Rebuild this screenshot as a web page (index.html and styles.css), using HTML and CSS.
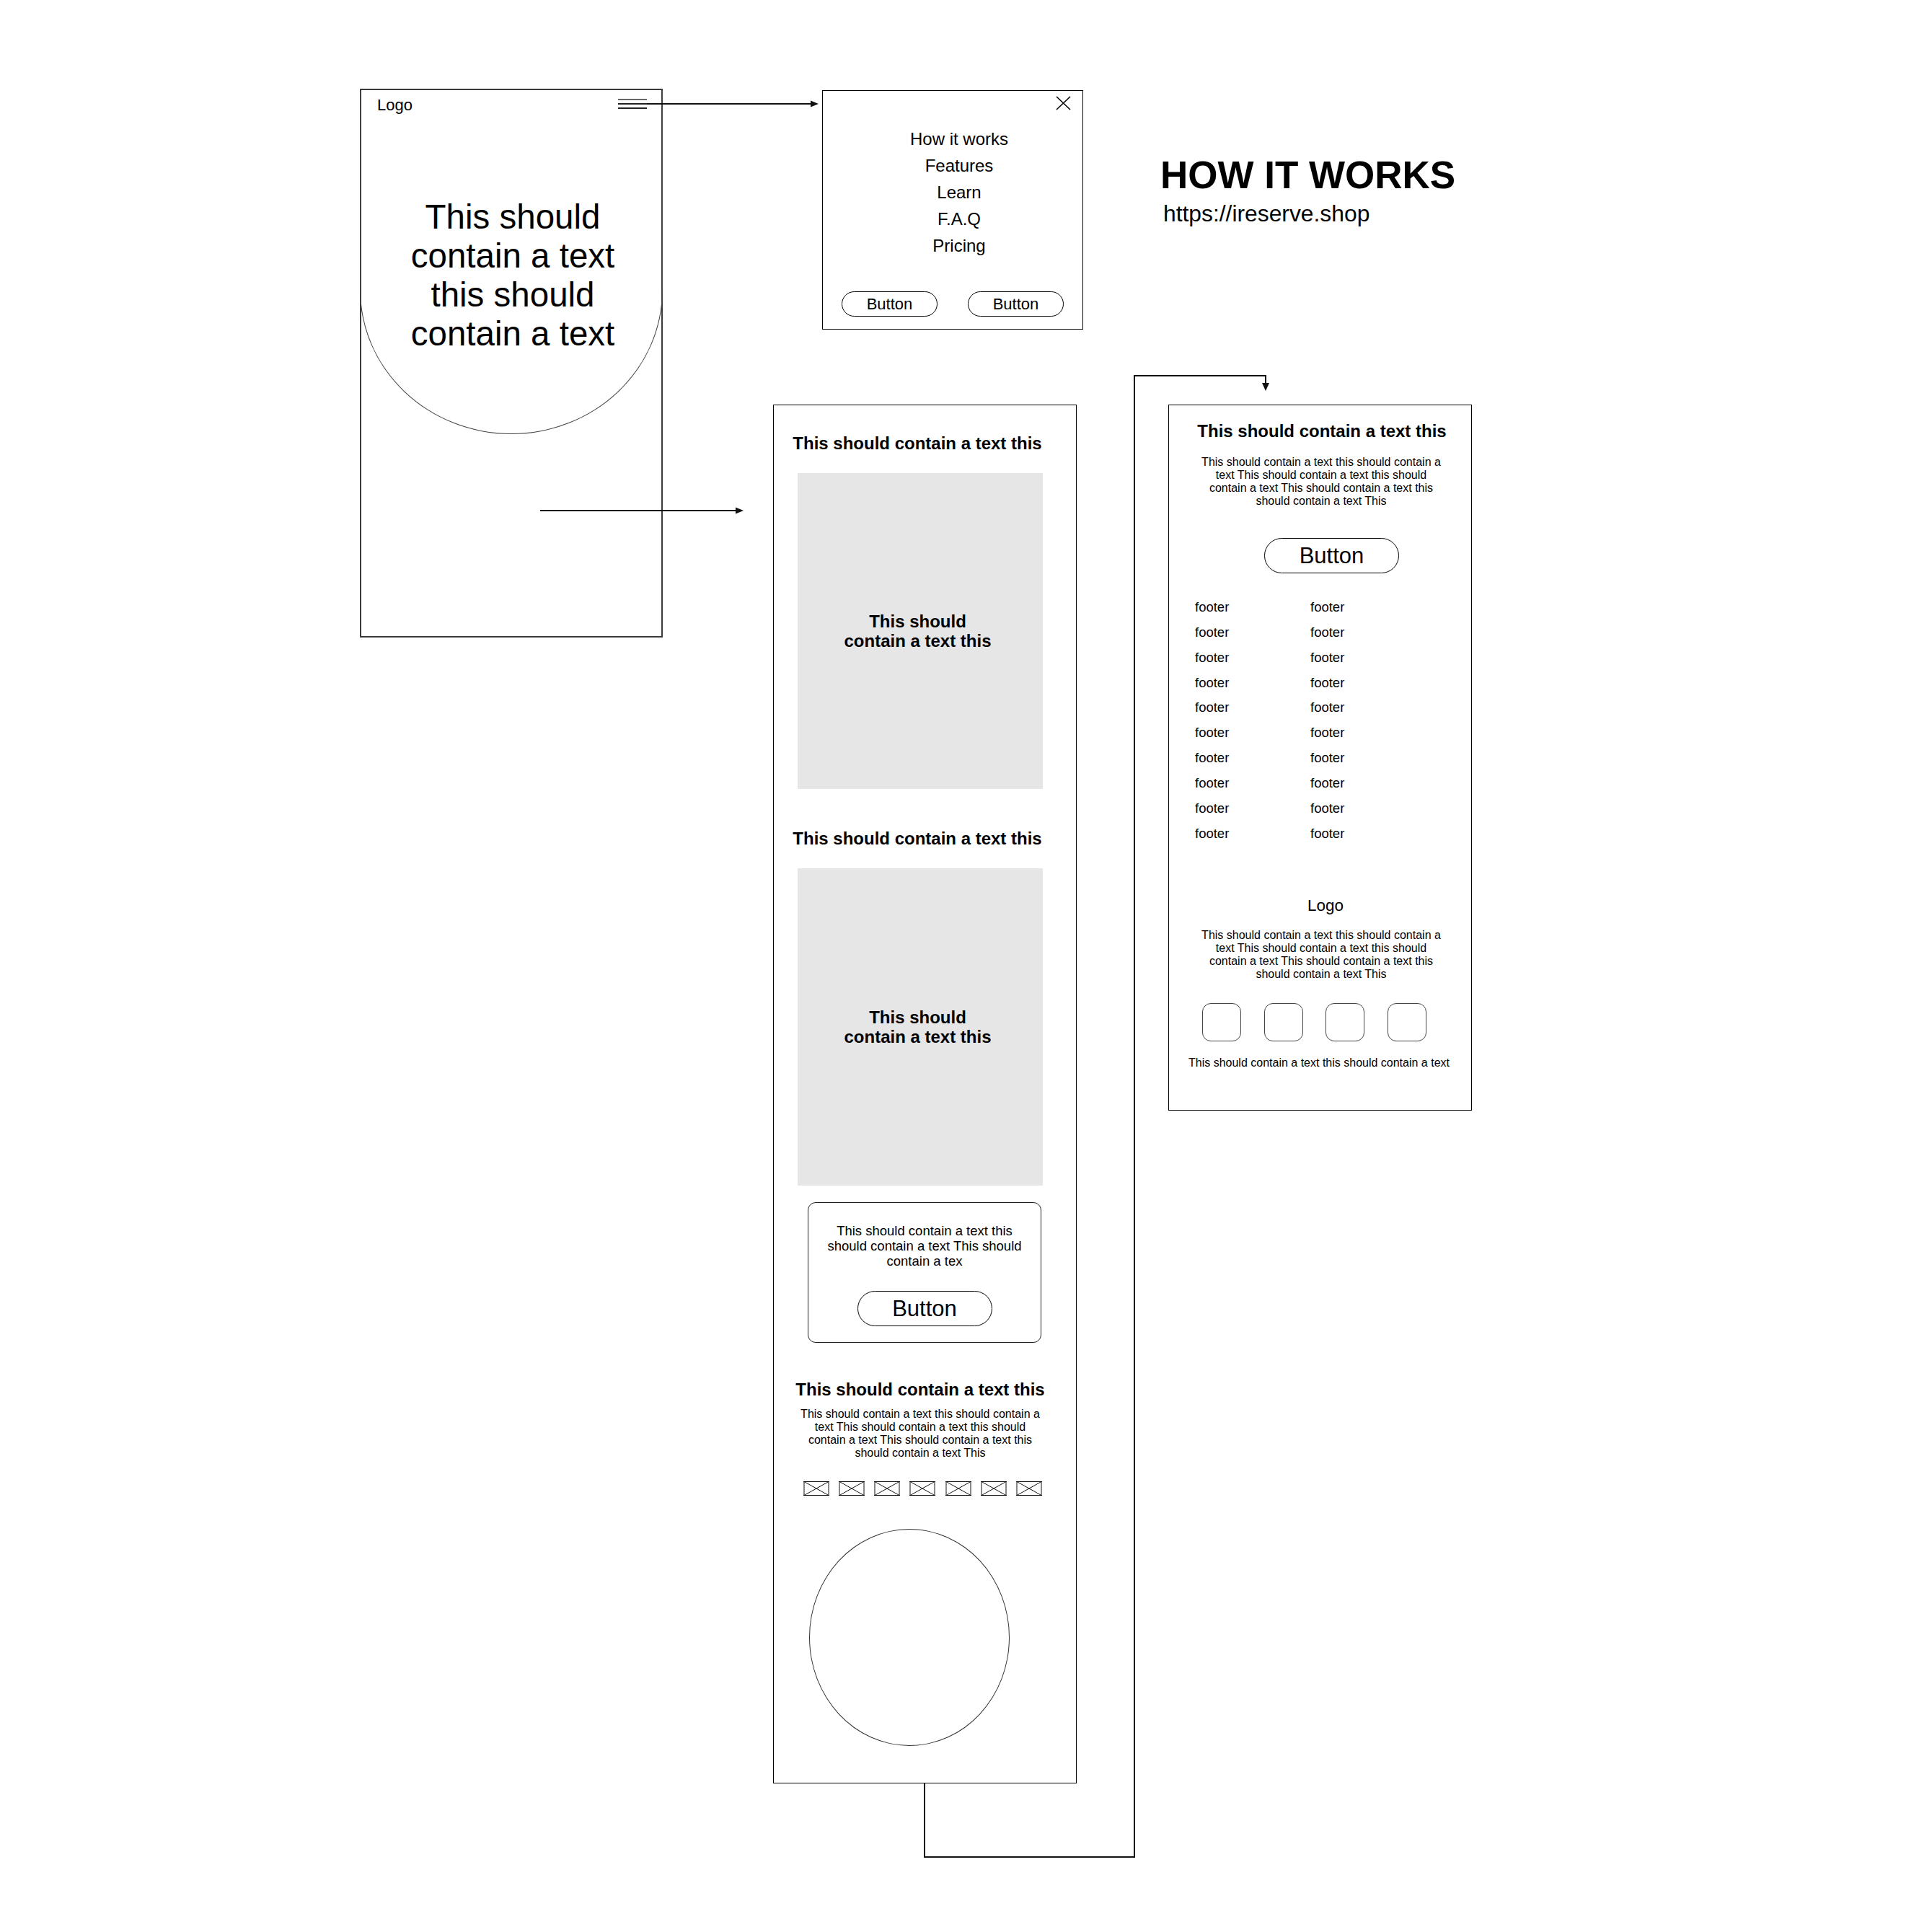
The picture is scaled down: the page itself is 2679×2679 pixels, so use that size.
FILE: index.html
```html
<!DOCTYPE html>
<html lang="en">
<head>
    <meta charset="UTF-8">
    <meta name="viewport" content="width=device-width, initial-scale=1.0">
    <title>How it works - wireframe</title>
    <link rel="stylesheet" href="styles.css">
</head>
<body>
<div class="canvas">

    <!-- landing screen -->
    <div class="frame frame-hero">
        <div class="hero-shape">
            <div class="hero-top">
                <div class="hero-logo">Logo</div>
                <div class="burger"><span></span><span></span><span></span></div>
            </div>
            <div class="hero-text">This should<br>contain a text<br>this should<br>contain a text</div>
        </div>
    </div>

    <!-- menu opened -->
    <div class="frame frame-menu">
        <div class="menu-close">
            <svg width="21" height="20" viewBox="0 0 21 20"><path d="M1 1 L20 19 M20 1 L1 19"/></svg>
        </div>
        <ul class="menu-links">
            <li>How it works</li>
            <li>Features</li>
            <li>Learn</li>
            <li>F.A.Q</li>
            <li>Pricing</li>
        </ul>
        <div class="menu-buttons">
            <div class="pill pill-sm">Button</div>
            <div class="pill pill-sm">Button</div>
        </div>
    </div>

    <div class="page-title">
        <div class="title">HOW IT WORKS</div>
        <div class="url">https://ireserve.shop</div>
    </div>

    <!-- scrolled content -->
    <div class="frame frame-long">
        <h2 class="section-title shift-left">This should contain a text this</h2>
        <div class="shot">This should<br>contain a text this</div>

        <h2 class="section-title shift-left gap-title">This should contain a text this</h2>
        <div class="shot shot-2">This should<br>contain a text this</div>

        <div class="cta-card">
            <p>This should contain a text this<br>should contain a text This should<br>contain a tex</p>
            <div class="pill pill-lg">Button</div>
        </div>

        <h2 class="section-title about-title">This should contain a text this</h2>
        <p class="copy">This should contain a text this should contain a<br>text This should contain a text this should<br>contain a text This should contain a text this<br>should contain a text This</p>

        <div class="ph-row">
            <svg class="ph" width="36" height="20" viewBox="0 0 36 20"><path class="ph-side" d="M1 0 V20 M35 0 V20"/><path class="ph-edge" d="M0 0.5 H36 M0 19.5 H36 M1 0.5 L35 19.5 M35 0.5 L1 19.5"/></svg>
            <svg class="ph" width="36" height="20" viewBox="0 0 36 20"><path class="ph-side" d="M1 0 V20 M35 0 V20"/><path class="ph-edge" d="M0 0.5 H36 M0 19.5 H36 M1 0.5 L35 19.5 M35 0.5 L1 19.5"/></svg>
            <svg class="ph" width="36" height="20" viewBox="0 0 36 20"><path class="ph-side" d="M1 0 V20 M35 0 V20"/><path class="ph-edge" d="M0 0.5 H36 M0 19.5 H36 M1 0.5 L35 19.5 M35 0.5 L1 19.5"/></svg>
            <svg class="ph" width="36" height="20" viewBox="0 0 36 20"><path class="ph-side" d="M1 0 V20 M35 0 V20"/><path class="ph-edge" d="M0 0.5 H36 M0 19.5 H36 M1 0.5 L35 19.5 M35 0.5 L1 19.5"/></svg>
            <svg class="ph" width="36" height="20" viewBox="0 0 36 20"><path class="ph-side" d="M1 0 V20 M35 0 V20"/><path class="ph-edge" d="M0 0.5 H36 M0 19.5 H36 M1 0.5 L35 19.5 M35 0.5 L1 19.5"/></svg>
            <svg class="ph" width="36" height="20" viewBox="0 0 36 20"><path class="ph-side" d="M1 0 V20 M35 0 V20"/><path class="ph-edge" d="M0 0.5 H36 M0 19.5 H36 M1 0.5 L35 19.5 M35 0.5 L1 19.5"/></svg>
            <svg class="ph" width="36" height="20" viewBox="0 0 36 20"><path class="ph-side" d="M1 0 V20 M35 0 V20"/><path class="ph-edge" d="M0 0.5 H36 M0 19.5 H36 M1 0.5 L35 19.5 M35 0.5 L1 19.5"/></svg>
        </div>

        <div class="avatar"></div>
    </div>

    <!-- footer screen -->
    <div class="frame frame-footer">
        <h2 class="section-title">This should contain a text this</h2>
        <p class="copy">This should contain a text this should contain a<br>text This should contain a text this should<br>contain a text This should contain a text this<br>should contain a text This</p>
        <div class="pill pill-lg">Button</div>

        <div class="footer-links">
            <div>footer</div><div>footer</div>
            <div>footer</div><div>footer</div>
            <div>footer</div><div>footer</div>
            <div>footer</div><div>footer</div>
            <div>footer</div><div>footer</div>
            <div>footer</div><div>footer</div>
            <div>footer</div><div>footer</div>
            <div>footer</div><div>footer</div>
            <div>footer</div><div>footer</div>
            <div>footer</div><div>footer</div>
        </div>

        <div class="footer-logo">Logo</div>
        <p class="copy footer-copy">This should contain a text this should contain a<br>text This should contain a text this should<br>contain a text This should contain a text this<br>should contain a text This</p>

        <div class="socials"><span></span><span></span><span></span><span></span></div>
        <div class="legal">This should contain a text this should contain a text</div>
    </div>

    <!-- flow arrows -->
    <svg class="links" width="2679" height="2679" viewBox="0 0 2679 2679">
        <g class="link-lines">
            <path d="M897 144 H1126"/>
            <path d="M749 708 H1022"/>
            <path d="M1282 2473 V2575 H1573 V521 H1755 V532"/>
        </g>
        <g class="link-heads">
            <path d="M1124 139.5 L1135 144 L1124 148.5 Z"/>
            <path d="M1020 703.5 L1031 708 L1020 712.5 Z"/>
            <path d="M1750 531 L1760 531 L1755 542 Z"/>
        </g>
    </svg>
</div>
</body>
</html>
```

FILE: styles.css
```css
body {
    margin: 0;
    background: #fff;
    color: #000;
    font-family: "Liberation Sans", Arial, sans-serif;
}
.canvas {
    position: relative;
    width: 2679px;
    height: 2679px;
    overflow: hidden;
}
.frame {
    position: absolute;
    box-sizing: border-box;
    background: #fff;
    border: 1px solid #000;
}

/* landing */
.frame-hero {
    left: 499px;
    top: 123px;
    width: 420px;
    height: 761px;
    border: 2px solid #3a3a3a;
}
.hero-shape {
    box-sizing: border-box;
    height: 477px;
    margin: 0 -2px;
    border: 1px solid #444;
    border-top: none;
    border-radius: 0 0 210px 210px / 0 0 200px 200px;
}
.hero-top {
    display: flex;
    justify-content: space-between;
    align-items: flex-start;
    padding: 8px 21px 0 23px;
}
.hero-logo {
    font-size: 22px;
    line-height: 26px;
}
.burger {
    width: 40px;
    margin-top: 4px;
}
.burger span {
    display: block;
    height: 2px;
    margin-bottom: 4px;
    background: #222;
}
.burger span:first-child {
    background: #666;
}
.hero-text {
    margin-top: 115px;
    padding-left: 4px;
    text-align: center;
    font-size: 47.5px;
    line-height: 54px;
}

/* menu */
.frame-menu {
    left: 1140px;
    top: 125px;
    width: 362px;
    height: 332px;
}
.menu-close {
    display: flex;
    justify-content: flex-end;
    padding: 7px 16px 0 0;
}
.menu-close svg {
    display: block;
    stroke: #000;
    stroke-width: 1.6;
}
.menu-links {
    list-style: none;
    margin: 21px 0 0;
    padding: 0 0 0 18px;
    text-align: center;
    font-size: 24px;
    line-height: 37px;
}
.menu-buttons {
    display: flex;
    justify-content: space-between;
    margin-top: 45px;
    padding: 0 26px;
}
.pill {
    box-sizing: border-box;
    display: flex;
    align-items: center;
    justify-content: center;
    border: 1px solid #000;
    border-radius: 999px;
}
.pill-sm {
    width: 133px;
    height: 35px;
    font-size: 22px;
}
.pill-lg {
    width: 187px;
    height: 49px;
    font-size: 31px;
}

.page-title {
    position: absolute;
    left: 1609px;
    top: 216px;
}
.title {
    font-size: 53px;
    font-weight: bold;
    line-height: 54px;
}
.url {
    margin-top: 11px;
    padding-left: 4px;
    font-size: 31.8px;
    line-height: 30px;
}

/* long page */
.frame-long {
    left: 1072px;
    top: 561px;
    width: 421px;
    height: 1912px;
    padding: 39px 46px 0 33px;
    display: flex;
    flex-direction: column;
}
.section-title {
    margin: 0;
    font-size: 24px;
    font-weight: bold;
    line-height: 28px;
    text-align: center;
    white-space: nowrap;
}
.frame-long .section-title {
    margin-left: -12px;
    margin-right: -12px;
}
.shift-left {
    padding-right: 8px;
}
.shot {
    margin-top: 27px;
    height: 438px;
    padding-right: 7px;
    background: #e6e6e6;
    display: flex;
    align-items: center;
    justify-content: center;
    text-align: center;
    font-size: 24px;
    font-weight: bold;
    line-height: 27px;
}
.shot-2 {
    height: 440px;
}
.gap-title {
    margin-top: 55px;
}
.cta-card {
    margin: 23px 2px 0 14px;
    padding: 28px 0 22px;
    border: 1px solid #222;
    border-radius: 11px;
    display: flex;
    flex-direction: column;
    align-items: center;
}
.cta-card p {
    margin: 0 0 31px;
    font-size: 18.5px;
    line-height: 21px;
    text-align: center;
}
.about-title {
    margin-top: 51px;
}
.copy {
    margin: 11px 0 0;
    font-size: 16px;
    line-height: 18px;
    text-align: center;
}
.ph-row {
    display: flex;
    justify-content: space-between;
    margin: 30px 1px 0 8px;
}
.ph {
    display: block;
}
.ph-side {
    stroke: #888;
    stroke-width: 2;
}
.ph-edge {
    fill: none;
    stroke: #111;
    stroke-width: 1;
}
.avatar {
    box-sizing: border-box;
    width: 278px;
    height: 301px;
    margin: 46px 0 0 16px;
    border: 1px solid #333;
    border-radius: 50%;
}

/* footer page */
.frame-footer {
    left: 1620px;
    top: 561px;
    width: 421px;
    height: 979px;
    padding-top: 22px;
    display: flex;
    flex-direction: column;
}
.frame-footer .section-title {
    padding-left: 5px;
}
.frame-footer .copy {
    margin-top: 20px;
    padding-left: 3px;
}
.frame-footer .pill-lg {
    margin: 42px 0 0 132px;
}
.footer-links {
    display: grid;
    grid-template-columns: 160px 160px;
    margin-top: 30px;
    padding-left: 36px;
    font-size: 18.5px;
    line-height: 34.85px;
}
.footer-logo {
    margin-top: 70px;
    padding-left: 15px;
    text-align: center;
    font-size: 22.5px;
    line-height: 26px;
}
.frame-footer .footer-copy {
    margin-top: 19px;
}
.socials {
    display: flex;
    gap: 31.5px;
    margin-top: 31px;
    padding-left: 46px;
}
.socials span {
    box-sizing: border-box;
    width: 54px;
    height: 53px;
    border: 1px solid #444;
    border-radius: 12px;
}
.legal {
    margin-top: 21px;
    padding-right: 3px;
    font-size: 16px;
    line-height: 18px;
    text-align: center;
}

/* arrows between screens */
.links {
    position: absolute;
    left: 0;
    top: 0;
    pointer-events: none;
}
.link-lines path {
    fill: none;
    stroke: #111;
    stroke-width: 2;
}
.link-heads path {
    fill: #111;
}
```
